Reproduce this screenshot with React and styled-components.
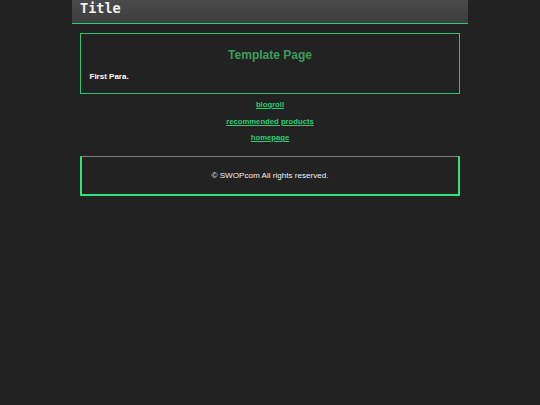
import styled, { createGlobalStyle } from "styled-components";

const GlobalStyle = createGlobalStyle`
  html, body {
    margin: 0;
    padding: 0;
    background: #222222;
    font-family: "Liberation Sans", Arial, sans-serif;
  }
  *, *::before, *::after {
    box-sizing: border-box;
  }
`;

const links = ["blogroll", "recommended products", "homepage"];

const Header = styled.header`
  width: 396px;
  height: 24px;
  margin: 0 auto;
  background: linear-gradient(#4a4a4a, #3d3d3d);
  border-bottom: 1.5px solid #2ecc71;
  overflow: hidden;
`;

const HeaderTitle = styled.h1`
  margin: 0;
  padding: 0 8px;
  font-family: "DejaVu Sans Mono", monospace;
  font-size: 13.5px;
  line-height: 16px;
  font-weight: bold;
  color: #f2f2f2;
`;

const Main = styled.main`
  width: 380px;
  height: 61px;
  margin: 9px auto 0;
  border: 1.5px solid #2ec46c;
  padding: 12.5px 8.5px 0;
`;

const PageTitle = styled.h2`
  margin: 0 0 9px;
  text-align: center;
  font-size: 12px;
  line-height: 16px;
  font-weight: bold;
  color: #3a9d5d;
`;

const Para = styled.p`
  margin: 0;
  font-size: 8px;
  line-height: 10px;
  font-weight: bold;
  color: #ffffff;
`;

const Nav = styled.nav`
  display: flex;
  flex-direction: column;
  align-items: center;
  gap: 6.5px;
  margin: 6px 0 13px;
`;

const NavLink = styled.a`
  font-size: 7.7px;
  font-weight: bold;
  line-height: 10px;
  color: #2ecc71;
  text-decoration: underline;
`;

const Footer = styled.footer`
  width: 380px;
  height: 40px;
  margin: 0 auto;
  border: 2px solid #2ee377;
  border-top: 1px solid #808080;
  display: flex;
  align-items: center;
  justify-content: center;
  font-size: 8.1px;
  color: #f0f0f0;
`;

export default function App() {
  return (
    <>
      <GlobalStyle />
      <Header>
        <HeaderTitle>Title</HeaderTitle>
      </Header>
      <Main>
        <PageTitle>Template Page</PageTitle>
        <Para>First Para.</Para>
      </Main>
      <Nav>
        {links.map((l) => (
          <NavLink key={l} href="#">
            {l}
          </NavLink>
        ))}
      </Nav>
      <Footer>© SWOPcom All rights reserved.</Footer>
    </>
  );
}
